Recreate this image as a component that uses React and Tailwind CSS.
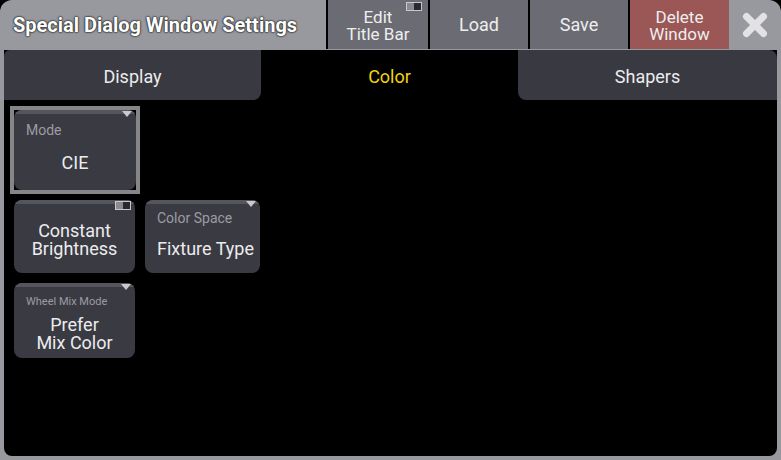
import React from "react";

function Triangle() {
  return (
    <svg className="absolute right-[4px] top-[1px]" width="10" height="7" viewBox="0 0 10 7">
      <polygon points="0,0 10,0 5,6" fill="#c9c9cc" />
    </svg>
  );
}

function Toggle({ className }) {
  return (
    <div className={"absolute flex h-[9px] w-[16px] border border-[#c8c8cc] bg-[#2a2a2e] " + className}>
      <div className="h-full w-1/2 bg-[#8a8a90]" />
    </div>
  );
}

function Item({ w, h, label, labelSize, lines, marker, valueCls }) {
  return (
    <div
      className="relative flex flex-col overflow-hidden rounded-[8px] bg-[#3a3a42]"
      style={{ width: w, height: h }}
    >
      <div className="h-[4px] w-full shrink-0 bg-[#55555d]" />
      {marker === "tri" && <Triangle />}
      {marker === "toggle" && <Toggle className="right-[4px] top-[1px]" />}
      {label && (
        <div className={"pl-[12px] text-[#9c9ca2] " + labelSize}>{label}</div>
      )}
      <div className={"flex flex-1 flex-col justify-center text-[18px] leading-[18px] text-[#ececee] " + valueCls}>
        {lines.map((l) => (
          <div key={l}>{l}</div>
        ))}
      </div>
    </div>
  );
}

export default function App() {
  return (
    <div className="h-[460px] w-[781px] bg-black font-['Roboto',sans-serif]">
      <div className="flex h-full w-full flex-col rounded-t-[12px] bg-[#98989f]">
        {/* Title bar */}
        <div className="flex h-[49px] shrink-0 bg-black">
          <div className="flex w-[326px] items-center rounded-tl-[12px] bg-[#98989f] pl-[13px] text-[20px] font-bold text-white [text-shadow:0_0_2px_#222,0_0_2px_#222,0_0_1px_#222]">
            Special Dialog Window Settings
          </div>
          <div className="relative ml-[2px] flex w-[100px] flex-col items-center justify-center bg-[#6b6b73] pt-[3px] text-[17px] leading-[17px] text-[#eeeeee]">
            <Toggle className="right-[6px] top-[2px]" />
            <div>Edit</div>
            <div>Title Bar</div>
          </div>
          <div className="ml-[2px] flex w-[98px] items-center justify-center bg-[#6b6b73] text-[18px] text-[#eeeeee]">
            Load
          </div>
          <div className="ml-[2px] flex w-[98px] items-center justify-center bg-[#6b6b73] text-[18px] text-[#eeeeee]">
            Save
          </div>
          <div className="ml-[2px] flex w-[99px] flex-col items-center justify-center bg-[#9b5656] pt-[3px] text-[17px] leading-[17px] text-[#eeeeee]">
            <div>Delete</div>
            <div>Window</div>
          </div>
          <div className="flex flex-1 items-center justify-center rounded-tr-[12px] bg-[#98989f]">
            <svg width="26" height="26" viewBox="0 0 26 26">
              <path d="M4.5 4.5 L21.5 21.5 M21.5 4.5 L4.5 21.5" stroke="#e2e2e4" strokeWidth="7" strokeLinecap="round" />
            </svg>
          </div>
        </div>
        {/* Body */}
        <div className="mx-[4px] mb-[4px] mt-[1px] flex flex-1 flex-col rounded-b-[8px] bg-black">
          {/* Tabs */}
          <div className="flex h-[50px] shrink-0 text-[18px]">
            <div className="flex w-[257px] items-center justify-center rounded-tl-[6px] rounded-br-[8px] bg-[#393941] pt-[2px] text-[#ececee]">
              Display
            </div>
            <div className="flex w-[257px] items-center justify-center pt-[2px] text-[#f2d20f]">
              Color
            </div>
            <div className="flex flex-1 items-center justify-center rounded-bl-[8px] rounded-tr-[8px] bg-[#393941] pt-[2px] text-[#ececee]">
              Shapers
            </div>
          </div>
          {/* Content */}
          <div className="flex flex-col pl-[6px] pt-[6px]">
            <div className="w-fit border-4 border-[#85858a]">
              <Item w={122} h={80} label="Mode" labelSize="text-[14px] pt-[6px]" lines={["CIE"]} marker="tri" valueCls="items-center pb-[5px]" />
            </div>
            <div className="mt-[6px] flex gap-[10px] pl-[4px]">
              <Item w={121} h={73} lines={["Constant", "Brightness"]} marker="toggle" valueCls="items-center pt-[3px]" />
              <Item w={115} h={73} label="Color Space" labelSize="text-[14px] pt-[4px]" lines={["Fixture Type"]} marker="tri" valueCls="pl-[12px] pb-[5px]" />
            </div>
            <div className="mt-[10px] pl-[4px]">
              <Item w={121} h={75} label="Wheel Mix Mode" labelSize="text-[11px] pt-[7px]" lines={["Prefer", "Mix Color"]} marker="tri" valueCls="items-center pb-[1px]" />
            </div>
          </div>
        </div>
      </div>
    </div>
  );
}
